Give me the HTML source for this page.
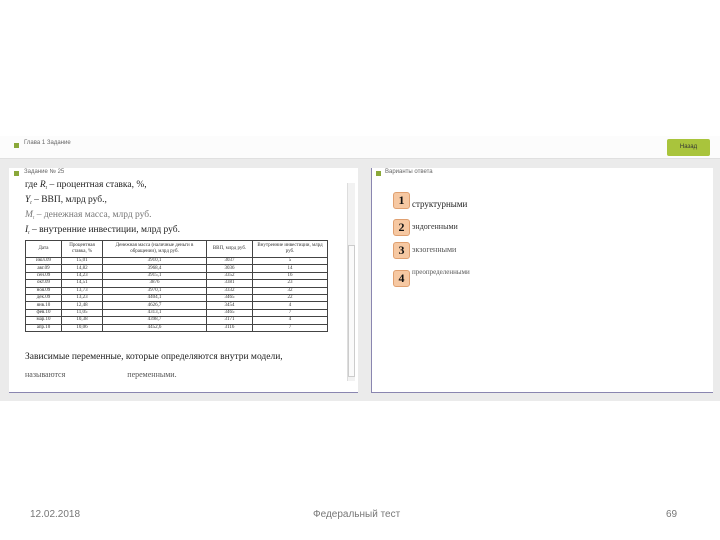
<!DOCTYPE html>
<html><head><meta charset="utf-8"><style>
body{margin:0;width:720px;height:540px;background:#fff;position:relative;overflow:hidden;font-family:"Liberation Sans",sans-serif}
.a{position:absolute}
.ser{font-family:"Liberation Serif",serif}
.ln{position:absolute;left:25px;font-family:"Liberation Serif",serif;font-size:9.5px;color:#222;line-height:11px;white-space:nowrap}
.s{font-size:5px;vertical-align:0;position:relative;top:2px}
table{border-collapse:collapse;font-family:"Liberation Serif",serif;font-size:5px;color:#333}
td{border:1px solid #444;text-align:center;height:6.4px;padding:0;line-height:6px}
.box{position:absolute;width:15px;height:15px;background:#f6c8a2;border:1px solid #e0a070;border-radius:3px;font:bold 12px "Liberation Serif",serif;text-align:center;line-height:15px;color:#111}
</style></head><body>
<div class="a" style="left:0;top:136px;width:720px;height:265px;background:#ebebeb"></div>
<div class="a" style="left:0;top:136px;width:720px;height:22px;background:#fcfcfc;border-bottom:1px solid #e0e0e0"></div>
<div class="a" style="left:14px;top:143px;width:5px;height:5px;background:#8aa83a"></div>
<div class="a" style="left:24px;top:140px;font-size:6px;color:#666">Глава 1 Задание</div>
<div class="a" style="left:667px;top:139px;width:43px;height:17px;background:#a9c43c;border-radius:2px;font-size:6px;color:#333;text-align:center;line-height:17px">Назад</div>
<div class="a" style="left:9px;top:168px;width:349px;height:224px;background:#fff;border-bottom:1px solid #8a86b0"></div>
<div class="a" style="left:371px;top:168px;width:341px;height:224px;background:#fff;border-left:1px solid #8a86b0;border-bottom:1px solid #8a86b0"></div>
<div class="a" style="left:14px;top:171px;width:5px;height:5px;background:#8aa83a"></div>
<div class="a" style="left:24px;top:169px;font-size:6px;color:#666">Задание № 25</div>
<div class="a" style="left:376px;top:171px;width:5px;height:5px;background:#8aa83a"></div>
<div class="a" style="left:385px;top:169px;font-size:6px;color:#666">Варианты ответа</div>
<div class="a" style="left:347px;top:183px;width:7px;height:198px;background:#f2f2f2;border-left:1px solid #ddd"></div>
<div class="a" style="left:348px;top:245px;width:5px;height:130px;background:#fafafa;border:1px solid #ccc"></div>
<div class="ln" style="top:180px">где <i>R<span class="s">t</span></i> – процентная ставка, %,</div>
<div class="ln" style="top:195px"><i>Y<span class="s">t</span></i> – ВВП, млрд руб.,</div>
<div class="ln" style="top:210px;color:#777"><i>M<span class="s">t</span></i> – денежная масса, млрд руб.</div>
<div class="ln" style="top:225px"><i>I<span class="s">t</span></i> – внутренние инвестиции, млрд руб.</div>
<table class="a" style="left:25px;top:240px;width:303px">
<tr style="height:17px"><td style="width:35px">Дата</td><td style="width:40px">Процентная ставка, %</td><td style="width:103px">Денежная масса (наличные деньги в обращении), млрд руб.</td><td style="width:45px">ВВП, млрд руб.</td><td>Внутренние инвестиции, млрд руб.</td></tr>
<tr><td>июл.09</td><td>15,01</td><td>3910,1</td><td>3037</td><td>5</td></tr>
<tr><td>авг.09</td><td>14,82</td><td>3968,4</td><td>3036</td><td>14</td></tr>
<tr><td>сен.09</td><td>14,23</td><td>3915,1</td><td>3352</td><td>16</td></tr>
<tr><td>окт.09</td><td>14,51</td><td>3876</td><td>3381</td><td>23</td></tr>
<tr><td>ноя.09</td><td>13,73</td><td>3970,1</td><td>3332</td><td>32</td></tr>
<tr><td>дек.09</td><td>13,23</td><td>4404,1</td><td>3465</td><td>22</td></tr>
<tr><td>янв.10</td><td>12,48</td><td>4626,7</td><td>3454</td><td>4</td></tr>
<tr><td>фев.10</td><td>11,05</td><td>4313,1</td><td>3465</td><td>7</td></tr>
<tr><td>мар.10</td><td>10,38</td><td>4398,7</td><td>3171</td><td>4</td></tr>
<tr><td>апр.10</td><td>10,06</td><td>4452,6</td><td>3116</td><td>7</td></tr>
</table>
<div class="a ser" style="left:25px;top:352px;font-size:9.5px;color:#222">Зависимые переменные, которые определяются внутри модели,</div>
<div class="a ser" style="left:25px;top:370px;font-size:8px;color:#555">называются <span style="margin-left:60px">переменными.</span></div>
<div class="box" style="left:393px;top:192px">1</div>
<div class="a ser" style="left:412px;top:199px;font-size:9px;color:#222">структурными</div>
<div class="box" style="left:393px;top:219px">2</div>
<div class="a ser" style="left:412px;top:222px;font-size:8px;color:#333">эндогенными</div>
<div class="box" style="left:393px;top:242px">3</div>
<div class="a ser" style="left:412px;top:245px;font-size:8px;color:#555">экзогенными</div>
<div class="box" style="left:393px;top:270px">4</div>
<div class="a ser" style="left:412px;top:268px;font-size:7px;color:#555">преопределенными</div>
<div class="a" style="left:30px;top:509px;font-size:10px;color:#777">12.02.2018</div>
<div class="a" style="left:313px;top:509px;font-size:10px;color:#777">Федеральный тест</div>
<div class="a" style="left:666px;top:509px;font-size:10px;color:#777">69</div>
</body></html>
